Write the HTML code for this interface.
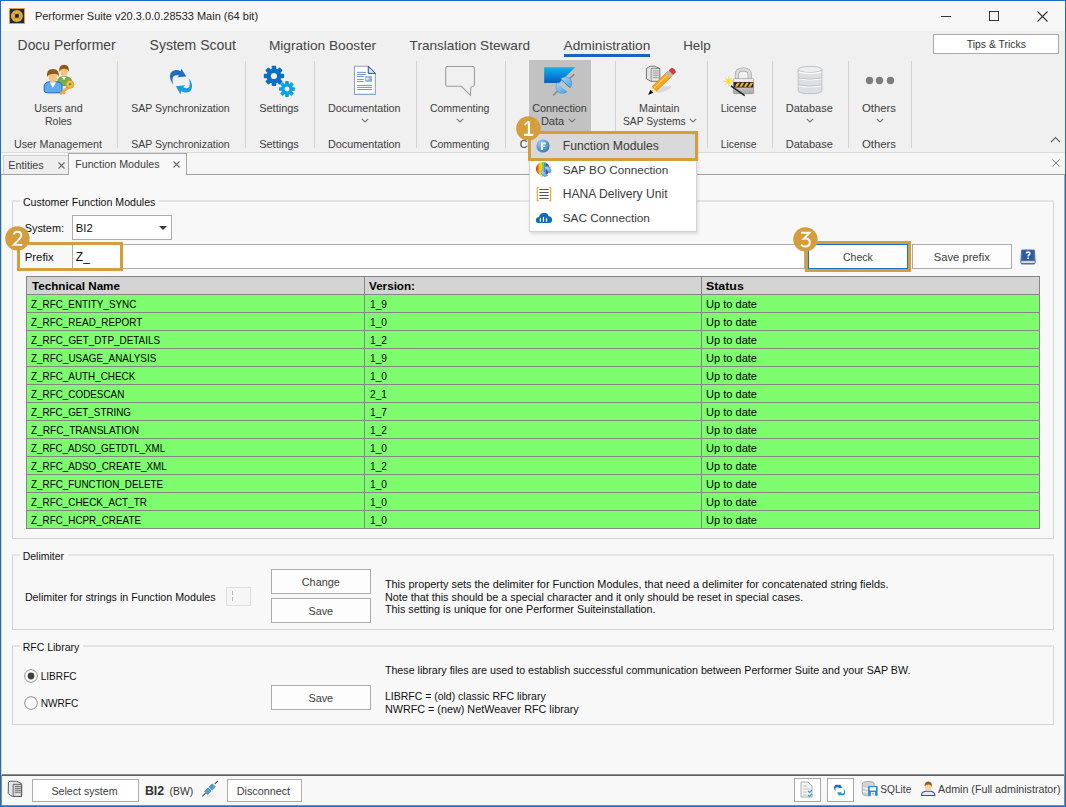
<!DOCTYPE html>
<html><head><meta charset="utf-8"><style>
html,body{margin:0;padding:0;}
body{width:1066px;height:807px;position:relative;overflow:hidden;background:#f8f8f8;font-family:'Liberation Sans', sans-serif;}
</style></head><body>
<div style="position:absolute;left:0px;top:0px;width:1066px;height:31px;background:#f7f7f7"></div>
<div style="position:absolute;left:0px;top:31px;width:1066px;height:121px;background:#f0f0f0"></div>
<div style="position:absolute;left:0px;top:152px;width:1066px;height:1px;background:#dadada"></div>
<div style="position:absolute;left:0px;top:153px;width:1066px;height:22px;background:#f6f6f6"></div>
<div style="position:absolute;left:0px;top:175px;width:1066px;height:600px;background:#f8f8f8"></div>
<svg style="position:absolute;left:9px;top:8px" width="16" height="16" viewBox="0 0 16 16"><rect x="0" y="0" width="16" height="16" fill="#dca23a"/><rect x="1" y="1" width="14" height="14" fill="#1b2a40"/><circle cx="7.9" cy="7.9" r="6" fill="#e4aa40"/><rect x="6" y="6" width="3.8" height="3.8" fill="#1b2a40"/><path d="M4.5 5.5L7 6.5M10.5 4.5L9.5 7M11.5 10.5L9 9.5M5.5 11.5L6.5 9" stroke="#8a6a30" stroke-width="0.5"/></svg>
<div id="t1" style="position:absolute;left:34.9px;top:11px;font-size:11.0px;line-height:1;font-family:'Liberation Sans', sans-serif;color:#262626;white-space:nowrap;"><span>Performer Suite v20.3.0.0.28533 Main (64 bit)</span></div>
<div style="position:absolute;left:941px;top:16px;width:10px;height:1px;background:#333"></div>
<div style="position:absolute;left:989px;top:11px;width:8px;height:8px;border:1px solid #333"></div>
<svg style="position:absolute;left:1037px;top:11px" width="11" height="11" viewBox="0 0 11 11"><path d="M0.5 0.5L10.5 10.5M10.5 0.5L0.5 10.5" stroke="#333" stroke-width="1.1"/></svg>
<div id="t2" style="position:absolute;left:17.6px;top:39px;font-size:13.9px;line-height:1;font-family:'Liberation Sans', sans-serif;color:#444444;white-space:nowrap;"><span>Docu Performer</span></div>
<div id="t3" style="position:absolute;left:149.6px;top:38px;font-size:14.0px;line-height:1;font-family:'Liberation Sans', sans-serif;color:#444444;white-space:nowrap;"><span>System Scout</span></div>
<div id="t4" style="position:absolute;left:268.9px;top:39px;font-size:13.7px;line-height:1;font-family:'Liberation Sans', sans-serif;color:#444444;white-space:nowrap;"><span>Migration Booster</span></div>
<div id="t5" style="position:absolute;left:409.6px;top:39px;font-size:13.6px;line-height:1;font-family:'Liberation Sans', sans-serif;color:#444444;white-space:nowrap;"><span>Translation Steward</span></div>
<div id="t6" style="position:absolute;left:563.6px;top:39px;font-size:13.7px;line-height:1;font-family:'Liberation Sans', sans-serif;color:#444444;white-space:nowrap;"><span>Administration</span></div>
<div id="t7" style="position:absolute;left:683.2px;top:39px;font-size:13.3px;line-height:1;font-family:'Liberation Sans', sans-serif;color:#444444;white-space:nowrap;"><span>Help</span></div>
<div style="position:absolute;left:564px;top:54px;width:86px;height:3px;background:#1a64c0"></div>
<div style="position:absolute;left:933px;top:34px;width:126px;height:20px;background:#fff;border:1px solid #aaaaaa;box-sizing:border-box"></div>
<div id="t8" style="position:absolute;left:696.3px;width:600px;text-align:center;top:40px;font-size:10.4px;line-height:1;font-family:'Liberation Sans', sans-serif;color:#333;white-space:nowrap;"><span>Tips &amp; Tricks</span></div>
<div style="position:absolute;left:117px;top:61px;width:1px;height:87px;background:#d2d2d2"></div>
<div style="position:absolute;left:245px;top:61px;width:1px;height:87px;background:#d2d2d2"></div>
<div style="position:absolute;left:314px;top:61px;width:1px;height:87px;background:#d2d2d2"></div>
<div style="position:absolute;left:416px;top:61px;width:1px;height:87px;background:#d2d2d2"></div>
<div style="position:absolute;left:505px;top:61px;width:1px;height:87px;background:#d2d2d2"></div>
<div style="position:absolute;left:615px;top:61px;width:1px;height:87px;background:#d2d2d2"></div>
<div style="position:absolute;left:707px;top:61px;width:1px;height:87px;background:#d2d2d2"></div>
<div style="position:absolute;left:772px;top:61px;width:1px;height:87px;background:#d2d2d2"></div>
<div style="position:absolute;left:848px;top:61px;width:1px;height:87px;background:#d2d2d2"></div>
<div style="position:absolute;left:911px;top:61px;width:1px;height:87px;background:#d2d2d2"></div>
<div style="position:absolute;left:529px;top:60px;width:62px;height:72px;background:#c2c2c2"></div>
<div id="t9" style="position:absolute;left:-241.6px;width:600px;text-align:center;top:103px;font-size:10.6px;line-height:1;font-family:'Liberation Sans', sans-serif;color:#3c3c3c;white-space:nowrap;"><span>Users and</span></div>
<div id="t10" style="position:absolute;left:-241.6px;width:600px;text-align:center;top:116px;font-size:10.5px;line-height:1;font-family:'Liberation Sans', sans-serif;color:#3c3c3c;white-space:nowrap;"><span>Roles</span></div>
<div id="t11" style="position:absolute;left:-242.0px;width:600px;text-align:center;top:139px;font-size:10.7px;line-height:1;font-family:'Liberation Sans', sans-serif;color:#3c3c3c;white-space:nowrap;"><span>User Management</span></div>
<div id="t12" style="position:absolute;left:-119.5px;width:600px;text-align:center;top:103px;font-size:10.5px;line-height:1;font-family:'Liberation Sans', sans-serif;color:#3c3c3c;white-space:nowrap;"><span>SAP Synchronization</span></div>
<div id="t13" style="position:absolute;left:-119.5px;width:600px;text-align:center;top:139px;font-size:10.5px;line-height:1;font-family:'Liberation Sans', sans-serif;color:#3c3c3c;white-space:nowrap;"><span>SAP Synchronization</span></div>
<div id="t14" style="position:absolute;left:-21.0px;width:600px;text-align:center;top:103px;font-size:11.0px;line-height:1;font-family:'Liberation Sans', sans-serif;color:#3c3c3c;white-space:nowrap;"><span>Settings</span></div>
<div id="t15" style="position:absolute;left:-21.0px;width:600px;text-align:center;top:139px;font-size:11.0px;line-height:1;font-family:'Liberation Sans', sans-serif;color:#3c3c3c;white-space:nowrap;"><span>Settings</span></div>
<div id="t16" style="position:absolute;left:64.3px;width:600px;text-align:center;top:103px;font-size:10.8px;line-height:1;font-family:'Liberation Sans', sans-serif;color:#3c3c3c;white-space:nowrap;"><span>Documentation</span></div>
<div id="t17" style="position:absolute;left:64.3px;width:600px;text-align:center;top:139px;font-size:10.8px;line-height:1;font-family:'Liberation Sans', sans-serif;color:#3c3c3c;white-space:nowrap;"><span>Documentation</span></div>
<svg style="position:absolute;left:361px;top:118px" width="8" height="5" viewBox="0 0 8 5"><path d="M0.8 0.8L4 4L7.2 0.8" fill="none" stroke="#777" stroke-width="1.2"/></svg>
<div id="t18" style="position:absolute;left:159.7px;width:600px;text-align:center;top:103px;font-size:10.5px;line-height:1;font-family:'Liberation Sans', sans-serif;color:#3c3c3c;white-space:nowrap;"><span>Commenting</span></div>
<div id="t19" style="position:absolute;left:159.7px;width:600px;text-align:center;top:139px;font-size:10.5px;line-height:1;font-family:'Liberation Sans', sans-serif;color:#3c3c3c;white-space:nowrap;"><span>Commenting</span></div>
<svg style="position:absolute;left:456px;top:118px" width="8" height="5" viewBox="0 0 8 5"><path d="M0.8 0.8L4 4L7.2 0.8" fill="none" stroke="#777" stroke-width="1.2"/></svg>
<div id="t20" style="position:absolute;left:259.5px;width:600px;text-align:center;top:103px;font-size:10.8px;line-height:1;font-family:'Liberation Sans', sans-serif;color:#3c3c3c;white-space:nowrap;"><span>Connection</span></div>
<div id="t21" style="position:absolute;left:540.9px;top:116px;font-size:11.0px;line-height:1;font-family:'Liberation Sans', sans-serif;color:#3c3c3c;white-space:nowrap;"><span>Data</span></div>
<svg style="position:absolute;left:568px;top:117.5px" width="8" height="5" viewBox="0 0 8 5"><path d="M0.8 0.8L4 4L7.2 0.8" fill="none" stroke="#777" stroke-width="1.2"/></svg>
<div id="t22" style="position:absolute;left:359.2px;width:600px;text-align:center;top:103px;font-size:10.7px;line-height:1;font-family:'Liberation Sans', sans-serif;color:#3c3c3c;white-space:nowrap;"><span>Maintain</span></div>
<div id="t23" style="position:absolute;left:622.9px;top:117px;font-size:10.3px;line-height:1;font-family:'Liberation Sans', sans-serif;color:#3c3c3c;white-space:nowrap;"><span>SAP Systems</span></div>
<svg style="position:absolute;left:688.5px;top:117.5px" width="8" height="5" viewBox="0 0 8 5"><path d="M0.8 0.8L4 4L7.2 0.8" fill="none" stroke="#777" stroke-width="1.2"/></svg>
<div id="t24" style="position:absolute;left:438.7px;width:600px;text-align:center;top:104px;font-size:10.4px;line-height:1;font-family:'Liberation Sans', sans-serif;color:#3c3c3c;white-space:nowrap;"><span>License</span></div>
<div id="t25" style="position:absolute;left:438.7px;width:600px;text-align:center;top:140px;font-size:10.4px;line-height:1;font-family:'Liberation Sans', sans-serif;color:#3c3c3c;white-space:nowrap;"><span>License</span></div>
<div id="t26" style="position:absolute;left:509.3px;width:600px;text-align:center;top:103px;font-size:11.0px;line-height:1;font-family:'Liberation Sans', sans-serif;color:#3c3c3c;white-space:nowrap;"><span>Database</span></div>
<div id="t27" style="position:absolute;left:509.3px;width:600px;text-align:center;top:139px;font-size:11.0px;line-height:1;font-family:'Liberation Sans', sans-serif;color:#3c3c3c;white-space:nowrap;"><span>Database</span></div>
<svg style="position:absolute;left:805.5px;top:118px" width="8" height="5" viewBox="0 0 8 5"><path d="M0.8 0.8L4 4L7.2 0.8" fill="none" stroke="#777" stroke-width="1.2"/></svg>
<div id="t28" style="position:absolute;left:579.0px;width:600px;text-align:center;top:103px;font-size:11.3px;line-height:1;font-family:'Liberation Sans', sans-serif;color:#3c3c3c;white-space:nowrap;"><span>Others</span></div>
<div id="t29" style="position:absolute;left:579.0px;width:600px;text-align:center;top:139px;font-size:11.3px;line-height:1;font-family:'Liberation Sans', sans-serif;color:#3c3c3c;white-space:nowrap;"><span>Others</span></div>
<svg style="position:absolute;left:875.5px;top:118px" width="8" height="5" viewBox="0 0 8 5"><path d="M0.8 0.8L4 4L7.2 0.8" fill="none" stroke="#777" stroke-width="1.2"/></svg>
<svg style="position:absolute;left:1050px;top:136px" width="11" height="7" viewBox="0 0 11 7"><path d="M1 6L5.5 1.5L10 6" fill="none" stroke="#666" stroke-width="1.2"/></svg>
<svg style="position:absolute;left:38px;top:60px" width="44" height="40" viewBox="0 0 888 807">
<path d="M395,520 L395,430 Q405,335 525,330 Q675,340 685,430 L685,520 Z" fill="#72b04c" stroke="#4f8f32" stroke-width="12"/>
<path d="M470,340 L525,405 L580,340 Z" fill="#fff"/>
<ellipse cx="525" cy="240" rx="72" ry="92" fill="#f0c47e"/>
<path d="M430,250 Q410,95 525,95 Q640,95 622,250 Q610,175 525,178 Q450,180 430,250Z" fill="#8c5a1c"/>
<path d="M125,525 Q130,445 240,440 L375,440 Q480,445 485,525 L485,615 Q482,662 425,662 L185,662 Q125,662 125,615 Z" fill="#62a8ec" stroke="#1c66cc" stroke-width="20"/>
<path d="M238,448 L300,565 L362,448 Z" fill="#fff"/>
<ellipse cx="300" cy="345" rx="88" ry="110" fill="#f0c47e"/>
<path d="M185,345 Q160,180 300,180 Q440,180 418,345 Q400,265 300,282 Q210,282 185,345Z" fill="#8c5a1c"/>
<path d="M585,545 L430,672 L462,700 L500,668 L528,690 L552,662 L530,640 L625,575 Z" fill="#f4b13c" stroke="#d8891a" stroke-width="12"/>
<circle cx="645" cy="492" r="80" fill="#f6bb48" stroke="#d8891a" stroke-width="14"/>
<circle cx="648" cy="487" r="24" fill="#4a9c3a"/>
</svg>
<svg style="position:absolute;left:160px;top:60px" width="44" height="40" viewBox="0 0 888 807"><path d="M270,500 C180,380 170,230 300,205 C350,198 390,210 415,225 L432,175 L530,335 L345,350 L390,315 C340,300 290,300 265,340 C245,380 250,440 270,500 Z" fill="#1e6fc0"/>
<path d="M575,365 C650,450 680,560 600,640 C540,670 470,650 430,630 L410,690 L320,530 L505,510 L470,550 C520,575 570,580 590,540 C610,500 600,420 575,365 Z" fill="#1a9ddc"/></svg>
<svg style="position:absolute;left:258px;top:60px" width="44" height="40" viewBox="0 0 888 807"><circle cx="322" cy="322" r="150" fill="#0a6fc2"/><rect x="276.0" y="117" width="92" height="205" rx="16.56" fill="#0a6fc2" transform="rotate(0.0 322 322)"/><rect x="276.0" y="117" width="92" height="205" rx="16.56" fill="#0a6fc2" transform="rotate(45.0 322 322)"/><rect x="276.0" y="117" width="92" height="205" rx="16.56" fill="#0a6fc2" transform="rotate(90.0 322 322)"/><rect x="276.0" y="117" width="92" height="205" rx="16.56" fill="#0a6fc2" transform="rotate(135.0 322 322)"/><rect x="276.0" y="117" width="92" height="205" rx="16.56" fill="#0a6fc2" transform="rotate(180.0 322 322)"/><rect x="276.0" y="117" width="92" height="205" rx="16.56" fill="#0a6fc2" transform="rotate(225.0 322 322)"/><rect x="276.0" y="117" width="92" height="205" rx="16.56" fill="#0a6fc2" transform="rotate(270.0 322 322)"/><rect x="276.0" y="117" width="92" height="205" rx="16.56" fill="#0a6fc2" transform="rotate(315.0 322 322)"/><circle cx="322" cy="322" r="62" fill="#f0f0f0"/><circle cx="585" cy="585" r="118" fill="#0ba2e4"/><rect x="548.0" y="423" width="74" height="162" rx="13.32" fill="#0ba2e4" transform="rotate(0.0 585 585)"/><rect x="548.0" y="423" width="74" height="162" rx="13.32" fill="#0ba2e4" transform="rotate(45.0 585 585)"/><rect x="548.0" y="423" width="74" height="162" rx="13.32" fill="#0ba2e4" transform="rotate(90.0 585 585)"/><rect x="548.0" y="423" width="74" height="162" rx="13.32" fill="#0ba2e4" transform="rotate(135.0 585 585)"/><rect x="548.0" y="423" width="74" height="162" rx="13.32" fill="#0ba2e4" transform="rotate(180.0 585 585)"/><rect x="548.0" y="423" width="74" height="162" rx="13.32" fill="#0ba2e4" transform="rotate(225.0 585 585)"/><rect x="548.0" y="423" width="74" height="162" rx="13.32" fill="#0ba2e4" transform="rotate(270.0 585 585)"/><rect x="548.0" y="423" width="74" height="162" rx="13.32" fill="#0ba2e4" transform="rotate(315.0 585 585)"/><circle cx="585" cy="585" r="50" fill="#f0f0f0"/></svg>
<svg style="position:absolute;left:343px;top:60px" width="44" height="40" viewBox="0 0 888 807">
<path d="M232,127 L510,127 L653,270 L653,693 L232,693 Z" fill="#fff" stroke="#8ea4c6" stroke-width="22"/>
<path d="M510,127 L653,270 L510,270 Z" fill="#d4e4f6" stroke="#2a4a7a" stroke-width="20"/>
<g stroke="#6a92d6" stroke-width="20">
<path d="M285,250H460M285,292H460M285,333H420M285,392H420M285,433H420M285,513H585M285,553H585M285,595H585"/>
</g>
<rect x="448" y="325" width="137" height="115" fill="#8fb0dc"/>
<path d="M470,345 L540,380 L470,410Z" fill="#e8f0fa"/>
</svg>
<svg style="position:absolute;left:438px;top:60px" width="44" height="40" viewBox="0 0 888 807"><path d="M190,130 L700,130 Q735,130 735,165 L735,495 Q735,530 700,530 Q660,535 660,580 L655,712 L470,530 L190,530 Q155,530 155,495 L155,165 Q155,130 190,130 Z" fill="none" stroke="#9c9c9c" stroke-width="22"/></svg>
<svg style="position:absolute;left:537px;top:60px" width="44" height="40" viewBox="0 0 888 807">
<defs><linearGradient id="cg" x1="0" y1="0" x2="0" y2="1"><stop offset="0" stop-color="#0db4f0"/><stop offset="1" stop-color="#0a5cc0"/></linearGradient>
<linearGradient id="pg" x1="0" y1="0" x2="1" y2="1"><stop offset="0" stop-color="#a8d8ff"/><stop offset="1" stop-color="#4a9ee0"/></linearGradient></defs>
<path d="M145,145 L772,145 L445,462 L145,462 Z" fill="url(#cg)"/>
<path d="M325,715 L420,620 M650,380 L755,285" stroke="#8c8c8c" stroke-width="34"/>
<path d="M420,450 L605,635 A128,128 0 0 1 420,450 Z" fill="url(#pg)" stroke="#3a86cc" stroke-width="10"/>
<path d="M440,470 L585,615" stroke="#d8eeff" stroke-width="16"/>
<path d="M480,380 L665,565 A128,128 0 0 0 480,380 Z" fill="url(#pg)" stroke="#3a86cc" stroke-width="10"/>
<path d="M500,400 L645,545" stroke="#2a70b8" stroke-width="12"/>
</svg>
<svg style="position:absolute;left:638px;top:60px" width="44" height="40" viewBox="0 0 888 807">
<path d="M170,170 L250,125 L330,125 L440,170 L440,430 L260,430 L170,380 Z" fill="#e4e4e4" stroke="#555" stroke-width="16"/>
<path d="M265,170 L440,170 M265,170 L265,430" stroke="#555" stroke-width="12" fill="none"/>
<path d="M300,220H420M300,265H420M300,310H420M300,355H420" stroke="#777" stroke-width="14"/>
<path d="M230,620 L580,270 L700,390 L350,740 Z" fill="#fff" opacity="0"/>
<ellipse cx="520" cy="590" rx="160" ry="45" fill="#c8c8c8" opacity="0.6" transform="rotate(-20 520 590)"/>
<path d="M280,540 L600,230 L690,320 L370,630 Z" fill="#f7a514" stroke="#e0780a" stroke-width="12"/>
<path d="M330,560 L630,265" stroke="#ffd070" stroke-width="22"/>
<path d="M560,270 L640,190 L730,280 L650,360 Z" fill="#b8b8b8"/>
<path d="M620,210 L670,160 Q700,150 740,190 Q770,225 760,250 L710,300 Z" fill="#d43a3a"/>
<path d="M280,540 L370,630 L205,705 Z" fill="#f4e2b0"/>
<path d="M250,600 L310,660 L205,705 Z" fill="#111"/>
</svg>
<svg style="position:absolute;left:716px;top:60px" width="44" height="40" viewBox="0 0 888 807">
<defs><linearGradient id="lk" x1="0" y1="0" x2="0" y2="1"><stop offset="0" stop-color="#f4f4f4"/><stop offset="1" stop-color="#a4a4a4"/></linearGradient></defs>
<path d="M420,385 L420,300 Q420,190 550,190 Q680,190 680,300 L680,385" fill="none" stroke="#a0a0a0" stroke-width="82"/>
<path d="M420,385 L420,300 Q420,190 550,190 Q680,190 680,300 L680,385" fill="none" stroke="#dadada" stroke-width="56"/>
<rect x="350" y="375" width="410" height="305" rx="22" fill="url(#lk)" stroke="#8c8c8c" stroke-width="12"/>
<rect x="356" y="445" width="398" height="110" fill="#262626"/>
<path d="M380,540 L430,460 L480,460 L430,540Z M470,540 L520,460 L570,460 L520,540Z M560,540 L610,460 L660,460 L610,540Z M650,540 L700,460 L750,460 L700,540Z" fill="#f5b820"/>
<path d="M300,520 L580,720" stroke="#222" stroke-width="30"/>
<path d="M255,330 V530 M155,430 H355 M185,360 L325,500 M325,360 L185,500" stroke="#e8d000" stroke-width="14"/>
<circle cx="255" cy="430" r="48" fill="#ffe600"/>
</svg>
<svg style="position:absolute;left:788px;top:60px" width="44" height="40" viewBox="0 0 888 807">
<path d="M205,190 L205,620 Q205,680 445,680 Q685,680 685,620 L685,190 Z" fill="#dde0e2" stroke="#b4b8bc" stroke-width="16"/>
<ellipse cx="445" cy="190" rx="240" ry="62" fill="#eceeef" stroke="#b4b8bc" stroke-width="16"/>
<path d="M220,245 Q445,300 670,245 M220,380 Q445,425 670,380 M220,520 Q445,565 670,520" fill="none" stroke="#fafafa" stroke-width="26"/>
<path d="M220,365 Q445,410 670,365 M220,505 Q445,550 670,505" fill="none" stroke="#a8acb0" stroke-width="12"/>
</svg>
<svg style="position:absolute;left:865.3px;top:76.1px" width="9" height="9" viewBox="0 0 9 9"><circle cx="4.5" cy="4.5" r="3.7" fill="#7d7d7d"/></svg>
<svg style="position:absolute;left:875.4px;top:76.1px" width="9" height="9" viewBox="0 0 9 9"><circle cx="4.5" cy="4.5" r="3.7" fill="#7d7d7d"/></svg>
<svg style="position:absolute;left:885.5px;top:76.1px" width="9" height="9" viewBox="0 0 9 9"><circle cx="4.5" cy="4.5" r="3.7" fill="#7d7d7d"/></svg>
<div style="position:absolute;left:187px;top:174px;width:879px;height:1px;background:#a0a0a0"></div>
<div style="position:absolute;left:0px;top:174px;width:3px;height:1px;background:#a0a0a0"></div>
<div style="position:absolute;left:3px;top:155px;width:66px;height:20px;background:#eeeeee;border:1px solid #cfcfcf;border-bottom:1px solid #a0a0a0;box-sizing:border-box"></div>
<div style="position:absolute;left:68px;top:153px;width:119px;height:22px;background:#f8f8f8;border:1px solid #a6a6a6;border-bottom:none;box-sizing:border-box"></div>
<div id="t30" style="position:absolute;left:8.3px;top:160px;font-size:10.8px;line-height:1;font-family:'Liberation Sans', sans-serif;color:#3c3c3c;white-space:nowrap;"><span>Entities</span></div>
<div id="t31" style="position:absolute;left:75.2px;top:159px;font-size:10.7px;line-height:1;font-family:'Liberation Sans', sans-serif;color:#3c3c3c;white-space:nowrap;"><span>Function Modules</span></div>
<svg style="position:absolute;left:57.5px;top:161.5px" width="7" height="7" viewBox="0 0 7 7"><path d="M0.5 0.5L6.5 6.5M6.5 0.5L0.5 6.5" stroke="#6a6a6a" stroke-width="1.1"/></svg>
<svg style="position:absolute;left:172.5px;top:161px" width="7" height="7" viewBox="0 0 7 7"><path d="M0.5 0.5L6.5 6.5M6.5 0.5L0.5 6.5" stroke="#6a6a6a" stroke-width="1.1"/></svg>
<svg style="position:absolute;left:1052px;top:159px" width="8" height="8" viewBox="0 0 8 8"><path d="M0.5 0.5L7.5 7.5M7.5 0.5L0.5 7.5" stroke="#7a7a7a" stroke-width="1.0"/></svg>
<div style="position:absolute;left:12px;top:201px;width:1042px;height:338px;border:1px solid #d4d4d4;border-top:none;box-sizing:border-box"></div>
<div style="position:absolute;left:12px;top:200px;width:1042px;height:2px;background:#e4e4e4"></div>
<div style="position:absolute;left:20px;top:200px;width:139px;height:3px;background:#f8f8f8"></div>
<div id="t32" style="position:absolute;left:22.9px;top:197px;font-size:10.6px;line-height:1;font-family:'Liberation Sans', sans-serif;color:#101010;white-space:nowrap;"><span>Customer Function Modules</span></div>
<div id="t33" style="position:absolute;left:24.7px;top:223px;font-size:10.9px;line-height:1;font-family:'Liberation Sans', sans-serif;color:#101010;white-space:nowrap;"><span>System:</span></div>
<div style="position:absolute;left:72px;top:215px;width:100px;height:25px;background:#fff;border:1px solid #acacac;box-sizing:border-box"></div>
<div id="t34" style="position:absolute;left:75.8px;top:223px;font-size:11.3px;line-height:1;font-family:'Liberation Sans', sans-serif;color:#101010;white-space:nowrap;"><span>BI2</span></div>
<svg style="position:absolute;left:159px;top:226px" width="8" height="4" viewBox="0 0 8 4"><path d="M0 0H8L4 4Z" fill="#3a3a3a"/></svg>
<div style="position:absolute;left:72px;top:244px;width:733px;height:25px;background:#fff;border:1px solid #acacac;box-sizing:border-box"></div>
<div id="t35" style="position:absolute;left:24.7px;top:252px;font-size:11.4px;line-height:1;font-family:'Liberation Sans', sans-serif;color:#101010;white-space:nowrap;"><span>Prefix</span></div>
<div id="t36" style="position:absolute;left:75.8px;top:251px;font-size:12.0px;line-height:1;font-family:'Liberation Sans', sans-serif;color:#101010;white-space:nowrap;"><span>Z_</span></div>
<div style="position:absolute;left:808px;top:244px;width:100px;height:25px;background:#fdfdfd;border:1px solid #1a72d0;box-sizing:border-box"></div>
<div id="t37" style="position:absolute;left:557.9px;width:600px;text-align:center;top:252px;font-size:10.5px;line-height:1;font-family:'Liberation Sans', sans-serif;color:#3c3c3c;white-space:nowrap;"><span>Check</span></div>
<div style="position:absolute;left:912px;top:244px;width:100px;height:25px;background:#fdfdfd;border:1px solid #acacac;box-sizing:border-box"></div>
<div id="t38" style="position:absolute;left:661.8px;width:600px;text-align:center;top:252px;font-size:11.2px;line-height:1;font-family:'Liberation Sans', sans-serif;color:#3c3c3c;white-space:nowrap;"><span>Save prefix</span></div>
<svg style="position:absolute;left:1020px;top:249px" width="16" height="16" viewBox="0 0 16 16"><path d="M2.2 0.5H13.8Q15 0.5 15 2L15.6 13.5Q15.6 15.5 13.8 15.5H2.2Q0.4 15.5 0.4 13.5L1 2Q1 0.5 2.2 0.5Z" fill="#4a70b0"/><rect x="2.6" y="1.5" width="10.8" height="9.5" fill="#2e5a9e"/><rect x="1.3" y="12.2" width="13.4" height="1.7" fill="#f2ead8"/><path d="M6.3 4.6Q6.3 3.1 8.1 3.1Q9.9 3.1 9.9 4.5Q9.9 5.5 8.8 6Q8.1 6.4 8.1 7.4" fill="none" stroke="#fff" stroke-width="1.5"/><rect x="7.3" y="8.4" width="1.6" height="1.6" fill="#fff"/></svg>
<div style="position:absolute;left:26px;top:276px;width:1014px;height:253px;background:#7dfc6e"></div>
<div style="position:absolute;left:27px;top:277px;width:1012px;height:17px;background:#d4d4d4"></div>
<div style="position:absolute;left:26px;top:276px;width:1014px;height:1px;background:#858585"></div>
<div style="position:absolute;left:26px;top:294px;width:1014px;height:1px;background:#858585"></div>
<div style="position:absolute;left:26px;top:312px;width:1014px;height:1px;background:#858585"></div>
<div style="position:absolute;left:26px;top:330px;width:1014px;height:1px;background:#858585"></div>
<div style="position:absolute;left:26px;top:348px;width:1014px;height:1px;background:#858585"></div>
<div style="position:absolute;left:26px;top:366px;width:1014px;height:1px;background:#858585"></div>
<div style="position:absolute;left:26px;top:384px;width:1014px;height:1px;background:#858585"></div>
<div style="position:absolute;left:26px;top:402px;width:1014px;height:1px;background:#858585"></div>
<div style="position:absolute;left:26px;top:420px;width:1014px;height:1px;background:#858585"></div>
<div style="position:absolute;left:26px;top:438px;width:1014px;height:1px;background:#858585"></div>
<div style="position:absolute;left:26px;top:456px;width:1014px;height:1px;background:#858585"></div>
<div style="position:absolute;left:26px;top:474px;width:1014px;height:1px;background:#858585"></div>
<div style="position:absolute;left:26px;top:492px;width:1014px;height:1px;background:#858585"></div>
<div style="position:absolute;left:26px;top:510px;width:1014px;height:1px;background:#858585"></div>
<div style="position:absolute;left:26px;top:528px;width:1014px;height:1px;background:#858585"></div>
<div style="position:absolute;left:26px;top:276px;width:1px;height:253px;background:#858585"></div>
<div style="position:absolute;left:364px;top:276px;width:1px;height:253px;background:#858585"></div>
<div style="position:absolute;left:701px;top:276px;width:1px;height:253px;background:#858585"></div>
<div style="position:absolute;left:1039px;top:276px;width:1px;height:253px;background:#858585"></div>
<div id="t39" style="position:absolute;left:32.2px;top:281px;font-weight:bold;font-size:11.2px;line-height:1;font-family:'Liberation Sans', sans-serif;color:#000;white-space:nowrap;transform:scaleX(1.0431);transform-origin:0 0;"><span>Technical Name</span></div>
<div id="t40" style="position:absolute;left:369.3px;top:281px;font-weight:bold;font-size:11.2px;line-height:1;font-family:'Liberation Sans', sans-serif;color:#000;white-space:nowrap;transform:scaleX(1.0417);transform-origin:0 0;"><span>Version:</span></div>
<div id="t41" style="position:absolute;left:706.4px;top:281px;font-weight:bold;font-size:11.2px;line-height:1;font-family:'Liberation Sans', sans-serif;color:#000;white-space:nowrap;transform:scaleX(1.1052);transform-origin:0 0;"><span>Status</span></div>
<div id="t42" style="position:absolute;left:31.1px;top:299px;font-size:11px;line-height:1;font-family:'Liberation Sans', sans-serif;color:#000;white-space:nowrap;transform:scaleX(0.8973);transform-origin:0 0;"><span>Z_RFC_ENTITY_SYNC</span></div>
<div id="t43" style="position:absolute;left:370.4px;top:299px;font-size:11px;line-height:1;font-family:'Liberation Sans', sans-serif;color:#000;white-space:nowrap;transform:scaleX(0.9259);transform-origin:0 0;"><span>1_9</span></div>
<div id="t44" style="position:absolute;left:706.4px;top:299px;font-size:11px;line-height:1;font-family:'Liberation Sans', sans-serif;color:#000;white-space:nowrap;transform:scaleX(1.0046);transform-origin:0 0;"><span>Up to date</span></div>
<div id="t45" style="position:absolute;left:31.1px;top:317px;font-size:11px;line-height:1;font-family:'Liberation Sans', sans-serif;color:#000;white-space:nowrap;transform:scaleX(0.8983);transform-origin:0 0;"><span>Z_RFC_READ_REPORT</span></div>
<div id="t46" style="position:absolute;left:370.4px;top:317px;font-size:11px;line-height:1;font-family:'Liberation Sans', sans-serif;color:#000;white-space:nowrap;transform:scaleX(0.9259);transform-origin:0 0;"><span>1_0</span></div>
<div id="t47" style="position:absolute;left:706.4px;top:317px;font-size:11px;line-height:1;font-family:'Liberation Sans', sans-serif;color:#000;white-space:nowrap;transform:scaleX(1.0046);transform-origin:0 0;"><span>Up to date</span></div>
<div id="t48" style="position:absolute;left:31.1px;top:335px;font-size:11px;line-height:1;font-family:'Liberation Sans', sans-serif;color:#000;white-space:nowrap;transform:scaleX(0.8993);transform-origin:0 0;"><span>Z_RFC_GET_DTP_DETAILS</span></div>
<div id="t49" style="position:absolute;left:370.4px;top:335px;font-size:11px;line-height:1;font-family:'Liberation Sans', sans-serif;color:#000;white-space:nowrap;transform:scaleX(0.9259);transform-origin:0 0;"><span>1_2</span></div>
<div id="t50" style="position:absolute;left:706.4px;top:335px;font-size:11px;line-height:1;font-family:'Liberation Sans', sans-serif;color:#000;white-space:nowrap;transform:scaleX(1.0046);transform-origin:0 0;"><span>Up to date</span></div>
<div id="t51" style="position:absolute;left:31.1px;top:353px;font-size:11px;line-height:1;font-family:'Liberation Sans', sans-serif;color:#000;white-space:nowrap;transform:scaleX(0.9002);transform-origin:0 0;"><span>Z_RFC_USAGE_ANALYSIS</span></div>
<div id="t52" style="position:absolute;left:370.4px;top:353px;font-size:11px;line-height:1;font-family:'Liberation Sans', sans-serif;color:#000;white-space:nowrap;transform:scaleX(0.9259);transform-origin:0 0;"><span>1_9</span></div>
<div id="t53" style="position:absolute;left:706.4px;top:353px;font-size:11px;line-height:1;font-family:'Liberation Sans', sans-serif;color:#000;white-space:nowrap;transform:scaleX(1.0046);transform-origin:0 0;"><span>Up to date</span></div>
<div id="t54" style="position:absolute;left:31.1px;top:371px;font-size:11px;line-height:1;font-family:'Liberation Sans', sans-serif;color:#000;white-space:nowrap;transform:scaleX(0.8981);transform-origin:0 0;"><span>Z_RFC_AUTH_CHECK</span></div>
<div id="t55" style="position:absolute;left:370.4px;top:371px;font-size:11px;line-height:1;font-family:'Liberation Sans', sans-serif;color:#000;white-space:nowrap;transform:scaleX(0.9259);transform-origin:0 0;"><span>1_0</span></div>
<div id="t56" style="position:absolute;left:706.4px;top:371px;font-size:11px;line-height:1;font-family:'Liberation Sans', sans-serif;color:#000;white-space:nowrap;transform:scaleX(1.0046);transform-origin:0 0;"><span>Up to date</span></div>
<div id="t57" style="position:absolute;left:31.1px;top:389px;font-size:11px;line-height:1;font-family:'Liberation Sans', sans-serif;color:#000;white-space:nowrap;transform:scaleX(0.8979);transform-origin:0 0;"><span>Z_RFC_CODESCAN</span></div>
<div id="t58" style="position:absolute;left:370.4px;top:389px;font-size:11px;line-height:1;font-family:'Liberation Sans', sans-serif;color:#000;white-space:nowrap;transform:scaleX(0.9259);transform-origin:0 0;"><span>2_1</span></div>
<div id="t59" style="position:absolute;left:706.4px;top:389px;font-size:11px;line-height:1;font-family:'Liberation Sans', sans-serif;color:#000;white-space:nowrap;transform:scaleX(1.0046);transform-origin:0 0;"><span>Up to date</span></div>
<div id="t60" style="position:absolute;left:31.1px;top:407px;font-size:11px;line-height:1;font-family:'Liberation Sans', sans-serif;color:#000;white-space:nowrap;transform:scaleX(0.8940);transform-origin:0 0;"><span>Z_RFC_GET_STRING</span></div>
<div id="t61" style="position:absolute;left:370.4px;top:407px;font-size:11px;line-height:1;font-family:'Liberation Sans', sans-serif;color:#000;white-space:nowrap;transform:scaleX(0.9259);transform-origin:0 0;"><span>1_7</span></div>
<div id="t62" style="position:absolute;left:706.4px;top:407px;font-size:11px;line-height:1;font-family:'Liberation Sans', sans-serif;color:#000;white-space:nowrap;transform:scaleX(1.0046);transform-origin:0 0;"><span>Up to date</span></div>
<div id="t63" style="position:absolute;left:31.1px;top:425px;font-size:11px;line-height:1;font-family:'Liberation Sans', sans-serif;color:#000;white-space:nowrap;transform:scaleX(0.9179);transform-origin:0 0;"><span>Z_RFC_TRANSLATION</span></div>
<div id="t64" style="position:absolute;left:370.4px;top:425px;font-size:11px;line-height:1;font-family:'Liberation Sans', sans-serif;color:#000;white-space:nowrap;transform:scaleX(0.9259);transform-origin:0 0;"><span>1_2</span></div>
<div id="t65" style="position:absolute;left:706.4px;top:425px;font-size:11px;line-height:1;font-family:'Liberation Sans', sans-serif;color:#000;white-space:nowrap;transform:scaleX(1.0046);transform-origin:0 0;"><span>Up to date</span></div>
<div id="t66" style="position:absolute;left:31.1px;top:443px;font-size:11px;line-height:1;font-family:'Liberation Sans', sans-serif;color:#000;white-space:nowrap;transform:scaleX(0.8881);transform-origin:0 0;"><span>Z_RFC_ADSO_GETDTL_XML</span></div>
<div id="t67" style="position:absolute;left:370.4px;top:443px;font-size:11px;line-height:1;font-family:'Liberation Sans', sans-serif;color:#000;white-space:nowrap;transform:scaleX(0.9259);transform-origin:0 0;"><span>1_0</span></div>
<div id="t68" style="position:absolute;left:706.4px;top:443px;font-size:11px;line-height:1;font-family:'Liberation Sans', sans-serif;color:#000;white-space:nowrap;transform:scaleX(1.0046);transform-origin:0 0;"><span>Up to date</span></div>
<div id="t69" style="position:absolute;left:31.1px;top:461px;font-size:11px;line-height:1;font-family:'Liberation Sans', sans-serif;color:#000;white-space:nowrap;transform:scaleX(0.8970);transform-origin:0 0;"><span>Z_RFC_ADSO_CREATE_XML</span></div>
<div id="t70" style="position:absolute;left:370.4px;top:461px;font-size:11px;line-height:1;font-family:'Liberation Sans', sans-serif;color:#000;white-space:nowrap;transform:scaleX(0.9259);transform-origin:0 0;"><span>1_2</span></div>
<div id="t71" style="position:absolute;left:706.4px;top:461px;font-size:11px;line-height:1;font-family:'Liberation Sans', sans-serif;color:#000;white-space:nowrap;transform:scaleX(1.0046);transform-origin:0 0;"><span>Up to date</span></div>
<div id="t72" style="position:absolute;left:31.1px;top:479px;font-size:11px;line-height:1;font-family:'Liberation Sans', sans-serif;color:#000;white-space:nowrap;transform:scaleX(0.8975);transform-origin:0 0;"><span>Z_RFC_FUNCTION_DELETE</span></div>
<div id="t73" style="position:absolute;left:370.4px;top:479px;font-size:11px;line-height:1;font-family:'Liberation Sans', sans-serif;color:#000;white-space:nowrap;transform:scaleX(0.9259);transform-origin:0 0;"><span>1_0</span></div>
<div id="t74" style="position:absolute;left:706.4px;top:479px;font-size:11px;line-height:1;font-family:'Liberation Sans', sans-serif;color:#000;white-space:nowrap;transform:scaleX(1.0046);transform-origin:0 0;"><span>Up to date</span></div>
<div id="t75" style="position:absolute;left:31.1px;top:497px;font-size:11px;line-height:1;font-family:'Liberation Sans', sans-serif;color:#000;white-space:nowrap;transform:scaleX(0.8979);transform-origin:0 0;"><span>Z_RFC_CHECK_ACT_TR</span></div>
<div id="t76" style="position:absolute;left:370.4px;top:497px;font-size:11px;line-height:1;font-family:'Liberation Sans', sans-serif;color:#000;white-space:nowrap;transform:scaleX(0.9259);transform-origin:0 0;"><span>1_0</span></div>
<div id="t77" style="position:absolute;left:706.4px;top:497px;font-size:11px;line-height:1;font-family:'Liberation Sans', sans-serif;color:#000;white-space:nowrap;transform:scaleX(1.0046);transform-origin:0 0;"><span>Up to date</span></div>
<div id="t78" style="position:absolute;left:31.1px;top:515px;font-size:11px;line-height:1;font-family:'Liberation Sans', sans-serif;color:#000;white-space:nowrap;transform:scaleX(0.8968);transform-origin:0 0;"><span>Z_RFC_HCPR_CREATE</span></div>
<div id="t79" style="position:absolute;left:370.4px;top:515px;font-size:11px;line-height:1;font-family:'Liberation Sans', sans-serif;color:#000;white-space:nowrap;transform:scaleX(0.9259);transform-origin:0 0;"><span>1_0</span></div>
<div id="t80" style="position:absolute;left:706.4px;top:515px;font-size:11px;line-height:1;font-family:'Liberation Sans', sans-serif;color:#000;white-space:nowrap;transform:scaleX(1.0046);transform-origin:0 0;"><span>Up to date</span></div>
<div style="position:absolute;left:12px;top:555px;width:1042px;height:75px;border:1px solid #d4d4d4;border-top:none;box-sizing:border-box"></div>
<div style="position:absolute;left:12px;top:554px;width:1042px;height:2px;background:#e4e4e4"></div>
<div style="position:absolute;left:20px;top:554px;width:48px;height:3px;background:#f8f8f8"></div>
<div id="t81" style="position:absolute;left:22.7px;top:551px;font-size:10.5px;line-height:1;font-family:'Liberation Sans', sans-serif;color:#101010;white-space:nowrap;"><span>Delimiter</span></div>
<div id="t82" style="position:absolute;left:24.9px;top:592px;font-size:10.7px;line-height:1;font-family:'Liberation Sans', sans-serif;color:#101010;white-space:nowrap;"><span>Delimiter for strings in Function Modules</span></div>
<div style="position:absolute;left:226px;top:587px;width:25px;height:19px;background:#f6f6f6;border:1px solid #dedede;box-sizing:border-box"></div>
<div style="position:absolute;left:232px;top:591px;width:1px;height:4px;background:#b8b8b8"></div>
<div style="position:absolute;left:232px;top:597px;width:1px;height:4px;background:#b8b8b8"></div>
<div style="position:absolute;left:271px;top:569px;width:100px;height:25px;background:#fdfdfd;border:1px solid #acacac;box-sizing:border-box"></div>
<div id="t83" style="position:absolute;left:20.8px;width:600px;text-align:center;top:577px;font-size:10.9px;line-height:1;font-family:'Liberation Sans', sans-serif;color:#3c3c3c;white-space:nowrap;"><span>Change</span></div>
<div style="position:absolute;left:271px;top:598px;width:100px;height:25px;background:#fdfdfd;border:1px solid #acacac;box-sizing:border-box"></div>
<div id="t84" style="position:absolute;left:20.8px;width:600px;text-align:center;top:606px;font-size:10.8px;line-height:1;font-family:'Liberation Sans', sans-serif;color:#3c3c3c;white-space:nowrap;"><span>Save</span></div>
<div id="t85" style="position:absolute;left:384.9px;top:579px;font-size:10.9px;line-height:1;font-family:'Liberation Sans', sans-serif;color:#101010;white-space:nowrap;"><span>This property sets the delimiter for Function Modules, that need a delimiter for concatenated string fields.</span></div>
<div id="t86" style="position:absolute;left:384.9px;top:592px;font-size:10.8px;line-height:1;font-family:'Liberation Sans', sans-serif;color:#101010;white-space:nowrap;"><span>Note that this should be a special character and it only should be reset in special cases.</span></div>
<div id="t87" style="position:absolute;left:384.9px;top:604px;font-size:10.8px;line-height:1;font-family:'Liberation Sans', sans-serif;color:#101010;white-space:nowrap;"><span>This setting is unique for one Performer Suiteinstallation.</span></div>
<div style="position:absolute;left:12px;top:646px;width:1042px;height:79px;border:1px solid #d4d4d4;border-top:none;box-sizing:border-box"></div>
<div style="position:absolute;left:12px;top:645px;width:1042px;height:2px;background:#e4e4e4"></div>
<div style="position:absolute;left:20px;top:645px;width:63px;height:3px;background:#f8f8f8"></div>
<div id="t88" style="position:absolute;left:22.7px;top:642px;font-size:10.5px;line-height:1;font-family:'Liberation Sans', sans-serif;color:#101010;white-space:nowrap;"><span>RFC Library</span></div>
<svg style="position:absolute;left:24px;top:669px" width="14" height="14" viewBox="0 0 14 14"><circle cx="7" cy="7" r="6.3" fill="#fff" stroke="#8c8c8c" stroke-width="1"/><circle cx="7" cy="7" r="3.4" fill="#404040"/></svg>
<svg style="position:absolute;left:24px;top:696px" width="14" height="14" viewBox="0 0 14 14"><circle cx="7" cy="7" r="6.3" fill="#fff" stroke="#8c8c8c" stroke-width="1"/></svg>
<div id="t89" style="position:absolute;left:40.7px;top:672px;font-size:10.1px;line-height:1;font-family:'Liberation Sans', sans-serif;color:#101010;white-space:nowrap;"><span>LIBRFC</span></div>
<div id="t90" style="position:absolute;left:40.7px;top:699px;font-size:10.1px;line-height:1;font-family:'Liberation Sans', sans-serif;color:#101010;white-space:nowrap;"><span>NWRFC</span></div>
<div style="position:absolute;left:271px;top:685px;width:100px;height:25px;background:#fdfdfd;border:1px solid #acacac;box-sizing:border-box"></div>
<div id="t91" style="position:absolute;left:20.8px;width:600px;text-align:center;top:693px;font-size:10.8px;line-height:1;font-family:'Liberation Sans', sans-serif;color:#3c3c3c;white-space:nowrap;"><span>Save</span></div>
<div id="t92" style="position:absolute;left:384.9px;top:665px;font-size:10.7px;line-height:1;font-family:'Liberation Sans', sans-serif;color:#101010;white-space:nowrap;"><span>These library files are used to establish successful communication between Performer Suite and your SAP BW.</span></div>
<div id="t93" style="position:absolute;left:384.9px;top:691px;font-size:10.5px;line-height:1;font-family:'Liberation Sans', sans-serif;color:#101010;white-space:nowrap;"><span>LIBRFC = (old) classic RFC library</span></div>
<div id="t94" style="position:absolute;left:384.9px;top:704px;font-size:10.8px;line-height:1;font-family:'Liberation Sans', sans-serif;color:#101010;white-space:nowrap;"><span>NWRFC = (new) NetWeaver RFC library</span></div>
<div style="position:absolute;left:0px;top:774px;width:1066px;height:1px;background:#8a8a8a"></div>
<div style="position:absolute;left:0px;top:775px;width:1066px;height:1px;background:#606060"></div>
<div style="position:absolute;left:0px;top:776px;width:1066px;height:30px;background:#f8f8f8"></div>
<div style="position:absolute;left:0px;top:805px;width:1066px;height:1px;background:#8a8a8a"></div>
<div style="position:absolute;left:1px;top:775px;width:1px;height:31px;background:#8a8a8a"></div>
<div style="position:absolute;left:1064px;top:775px;width:1px;height:31px;background:#8a8a8a"></div>
<svg style="position:absolute;left:0px;top:768px" width="40" height="39" viewBox="0 0 828 807"><path d="M175,300 Q180,275 215,275 L340,275 L440,320 Q450,330 450,345 L450,570 Q450,590 430,590 L260,590 L185,545 Q170,535 170,520 Z" fill="#e6e6e6" stroke="#555" stroke-width="20"/><path d="M272,338 L445,338 L445,590 L272,590 Z" fill="#d4d4d4" stroke="#555" stroke-width="18"/><path d="M310,382H430M310,422H430M310,462H430M310,502H430" stroke="#666" stroke-width="18"/><rect x="345" y="538" width="25" height="22" fill="#fff"/><rect x="395" y="538" width="25" height="22" fill="#fff"/></svg>
<div style="position:absolute;left:32px;top:779px;width:107px;height:23px;background:#fff;border:1px solid #acacac;box-sizing:border-box"></div>
<div id="t95" style="position:absolute;left:-215.5px;width:600px;text-align:center;top:786px;font-size:10.6px;line-height:1;font-family:'Liberation Sans', sans-serif;color:#3c3c3c;white-space:nowrap;"><span>Select system</span></div>
<div id="t96" style="position:absolute;left:144.9px;top:785px;font-weight:bold;font-size:12.4px;line-height:1;font-family:'Liberation Sans', sans-serif;color:#333;white-space:nowrap;"><span>BI2</span></div>
<div id="t97" style="position:absolute;left:169.6px;top:787px;font-size:10.4px;line-height:1;font-family:'Liberation Sans', sans-serif;color:#333;white-space:nowrap;"><span>(BW)</span></div>
<svg style="position:absolute;left:196px;top:776px" width="30" height="28" viewBox="0 0 865 807">
<path d="M180,590 L275,495 M540,230 L625,150" stroke="#444" stroke-width="30"/>
<rect x="-70" y="-62" width="140" height="124" fill="#3aa8e8" stroke="#3a3a3a" stroke-width="12" transform="translate(342,440) rotate(-45)"/>
<rect x="-70" y="-62" width="140" height="124" fill="#3aa8e8" stroke="#3a3a3a" stroke-width="12" transform="translate(462,320) rotate(-45)"/>
<path d="M318,292 L490,464" stroke="#e8e8e8" stroke-width="22"/>
<ellipse cx="400" cy="580" rx="160" ry="22" fill="#000" opacity="0.08"/>
</svg>
<div style="position:absolute;left:227px;top:779px;width:75px;height:23px;background:#fff;border:1px solid #acacac;box-sizing:border-box"></div>
<div id="t98" style="position:absolute;left:-36.6px;width:600px;text-align:center;top:786px;font-size:10.8px;line-height:1;font-family:'Liberation Sans', sans-serif;color:#3c3c3c;white-space:nowrap;"><span>Disconnect</span></div>
<div style="position:absolute;left:794px;top:778px;width:27px;height:24px;background:#fff;border:1px solid #a8a8a8;box-sizing:border-box"></div>
<div style="position:absolute;left:827px;top:778px;width:27px;height:24px;background:#fff;border:1px solid #a8a8a8;box-sizing:border-box"></div>
<svg style="position:absolute;left:800px;top:781px" width="14" height="17" viewBox="0 0 14 17"><path d="M1 1H8L12 5V16H1Z" fill="#f4f4f4" stroke="#b0b0b0" stroke-width="1"/><path d="M3 5H7M3 8H10M3 11H7M3 14H7" stroke="#c0c0c0" stroke-width="1"/><path d="M8 10L9.5 11.5L12 9M8 14L9.5 15.5L12 13" stroke="#3aa0d0" stroke-width="1.2" fill="none"/></svg>
<svg style="position:absolute;left:829.4px;top:779.8px" width="22.3" height="19" viewBox="0 0 888 807" preserveAspectRatio="none"><path d="M270,500 C180,380 170,230 300,205 C350,198 390,210 415,225 L432,175 L530,335 L345,350 L390,315 C340,300 290,300 265,340 C245,380 250,440 270,500 Z" fill="#1e6fc0"/>
<path d="M575,365 C650,450 680,560 600,640 C540,670 470,650 430,630 L410,690 L320,530 L505,510 L470,550 C520,575 570,580 590,540 C610,500 600,420 575,365 Z" fill="#1a9ddc"/></svg>
<svg style="position:absolute;left:856px;top:776px" width="90" height="28" viewBox="0 0 1066 332">
<path d="M75,95 Q75,65 145,65 Q215,65 215,95 L215,205 Q215,235 145,235 Q75,235 75,205 Z" fill="#d0d4d8" stroke="#9aa0a6" stroke-width="10"/>
<path d="M80,140 Q145,165 210,140 M80,180 Q145,205 210,180" stroke="#f4f6f8" stroke-width="12" fill="none"/>
<rect x="143" y="118" width="113" height="117" rx="8" fill="#2a8ad4"/>
<rect x="162" y="132" width="75" height="40" fill="#fff"/>
<rect x="175" y="190" width="50" height="45" fill="#fff"/>
<rect x="195" y="200" width="12" height="20" fill="#2a8ad4"/>
<path d="M775,230 Q775,180 855,178 Q935,180 935,230 Z" fill="#e4e8f4" stroke="#3a4a9a" stroke-width="12"/>
<ellipse cx="855" cy="130" rx="38" ry="48" fill="#f6d2a0"/>
<path d="M812,125 Q810,65 860,65 Q905,68 900,130 Q885,95 855,100 Q830,100 812,125Z" fill="#9a5a1a"/>
</svg>
<div id="t99" style="position:absolute;left:880.2px;top:785px;font-size:10.2px;line-height:1;font-family:'Liberation Sans', sans-serif;color:#3c3c3c;white-space:nowrap;"><span>SQLite</span></div>
<div id="t100" style="position:absolute;left:938.1px;top:784px;font-size:10.7px;line-height:1;font-family:'Liberation Sans', sans-serif;color:#3c3c3c;white-space:nowrap;"><span>Admin (Full administrator)</span></div>
<div id="t101" style="position:absolute;left:260.0px;width:600px;text-align:center;top:139px;font-size:10.8px;line-height:1;font-family:'Liberation Sans', sans-serif;color:#3c3c3c;white-space:nowrap;"><span>Connection Data</span></div>
<div style="position:absolute;left:529px;top:131px;width:168px;height:101px;background:#fff;border:1px solid #d2d2d2;box-sizing:border-box;box-shadow:1px 2px 3px rgba(0,0,0,0.12)"></div>
<div style="position:absolute;left:531px;top:134px;width:164px;height:24px;background:#d9d9d9"></div>
<div id="t102" style="position:absolute;left:562.7px;top:140px;font-size:12.2px;line-height:1;font-family:'Liberation Sans', sans-serif;color:#3a3a3a;white-space:nowrap;"><span>Function Modules</span></div>
<div id="t103" style="position:absolute;left:562.7px;top:164px;font-size:11.7px;line-height:1;font-family:'Liberation Sans', sans-serif;color:#3a3a3a;white-space:nowrap;"><span>SAP BO Connection</span></div>
<div id="t104" style="position:absolute;left:562.7px;top:188px;font-size:12.1px;line-height:1;font-family:'Liberation Sans', sans-serif;color:#3a3a3a;white-space:nowrap;"><span>HANA Delivery Unit</span></div>
<div id="t105" style="position:absolute;left:562.7px;top:213px;font-size:11.8px;line-height:1;font-family:'Liberation Sans', sans-serif;color:#3a3a3a;white-space:nowrap;"><span>SAC Connection</span></div>
<svg style="position:absolute;left:536px;top:139px" width="14" height="14" viewBox="0 0 14 14"><defs><radialGradient id="fg" cx="0.35" cy="0.3" r="0.8"><stop offset="0" stop-color="#9cd0f4"/><stop offset="1" stop-color="#2a72b8"/></radialGradient></defs><circle cx="7" cy="7" r="6.6" fill="url(#fg)"/><path d="M5 3.5H9.6V5.3H7V6.4H9.2V8.1H7V10.8H5Z" fill="#fff"/></svg>
<svg style="position:absolute;left:530px;top:158px" width="30" height="70" viewBox="0 0 346 807">
<defs><clipPath id="gc"><circle cx="148" cy="125" r="80"/></clipPath>
<linearGradient id="dm" x1="0" y1="0" x2="1" y2="1"><stop offset="0" stop-color="#b8e0ff"/><stop offset="1" stop-color="#4a9ee0"/></linearGradient></defs>
<g clip-path="url(#gc)">
<rect x="60" y="40" width="30" height="180" fill="#e0301e"/>
<rect x="90" y="40" width="22" height="180" fill="#f08a10"/>
<rect x="112" y="40" width="24" height="180" fill="#f4d800"/>
<rect x="136" y="40" width="22" height="180" fill="#8cc830"/>
<rect x="158" y="40" width="24" height="180" fill="#20a0e0"/>
<rect x="182" y="40" width="50" height="180" fill="#6a3aa0"/>
</g>
<path d="M125,225 L160,190 M225,120 L250,95" stroke="#909090" stroke-width="8"/>
<path d="M140,135 L205,200 A46,46 0 0 1 140,135 Z" fill="url(#dm)" stroke="#3a86cc" stroke-width="5"/>
<path d="M165,110 L230,175 A46,46 0 0 0 165,110 Z" fill="url(#dm)" stroke="#3a86cc" stroke-width="5"/>
<path d="M100,340 H84 V492 H100 M222,340 H238 V492 H222" fill="none" stroke="#f5a01a" stroke-width="13"/>
<path d="M108,362H215M108,397H215M108,432H215M108,467H215" stroke="#555" stroke-width="12"/>
<path d="M95,750 Q65,750 68,715 Q72,680 105,680 Q110,640 160,632 Q205,630 215,672 Q255,675 255,712 Q255,750 220,750 Z" fill="#0f6cbd"/>
<path d="M120,695V735M155,680V735M190,695V735" stroke="#fff" stroke-width="14"/>
</svg>
<div style="position:absolute;left:528px;top:131px;width:170px;height:30px;border:3px solid #d59e3c;box-sizing:border-box"></div>
<div style="position:absolute;left:17px;top:242px;width:106px;height:29px;border:3px solid #d59e3c;box-sizing:border-box"></div>
<div style="position:absolute;left:805px;top:241px;width:106px;height:31px;border:3px solid #d59e3c;box-sizing:border-box"></div>
<svg style="position:absolute;left:516px;top:116px" width="25" height="25" viewBox="0 0 25 25"><circle cx="12.4" cy="12.4" r="12.2" fill="#d59e3c"/><path d="M12.9,5.2 V18.9 M8,18.9 H17.2" stroke="#fafafa" stroke-width="2.1" fill="none"/><path d="M8.6,8.9 L12.6,5.4" stroke="#fafafa" stroke-width="1.9" fill="none"/></svg>
<svg style="position:absolute;left:5px;top:226px" width="25" height="25" viewBox="0 0 25 25"><circle cx="12.4" cy="12.4" r="12.2" fill="#d59e3c"/><path d="M8.6,8.4 C9.2,6.4 10.8,5.7 12.5,5.7 C14.8,5.7 16.3,7.2 16.3,9.2 C16.3,11 15.2,12.2 13.5,13.8 L8.7,18.9 H17.3" stroke="#fafafa" stroke-width="1.9" fill="none" stroke-linejoin="miter"/></svg>
<svg style="position:absolute;left:793px;top:227px" width="25" height="25" viewBox="0 0 25 25"><circle cx="12.4" cy="12.4" r="12.2" fill="#d59e3c"/><path d="M8,5.8 H16.5 L11,11.6 C11.5,11.5 12,11.5 12.5,11.5 C15,11.5 16.8,13 16.8,15.5 C16.8,18 15,19.5 12.4,19.5 C10.6,19.5 9,18.8 8,17.6" stroke="#fafafa" stroke-width="1.9" fill="none"/></svg>
<div style="position:absolute;left:1px;top:175px;width:1px;height:600px;background:#d0d0d0"></div>
<div style="position:absolute;left:1064px;top:175px;width:1px;height:600px;background:#a8a8a8"></div>
<div style="position:absolute;left:0px;top:0px;width:1066px;height:1px;background:#1a6cc6"></div>
<div style="position:absolute;left:0px;top:806px;width:1066px;height:1px;background:#1a6cc6"></div>
<div style="position:absolute;left:0px;top:0px;width:1px;height:807px;background:#1a6cc6"></div>
<div style="position:absolute;left:1065px;top:0px;width:1px;height:807px;background:#1a6cc6"></div>
</body></html>
